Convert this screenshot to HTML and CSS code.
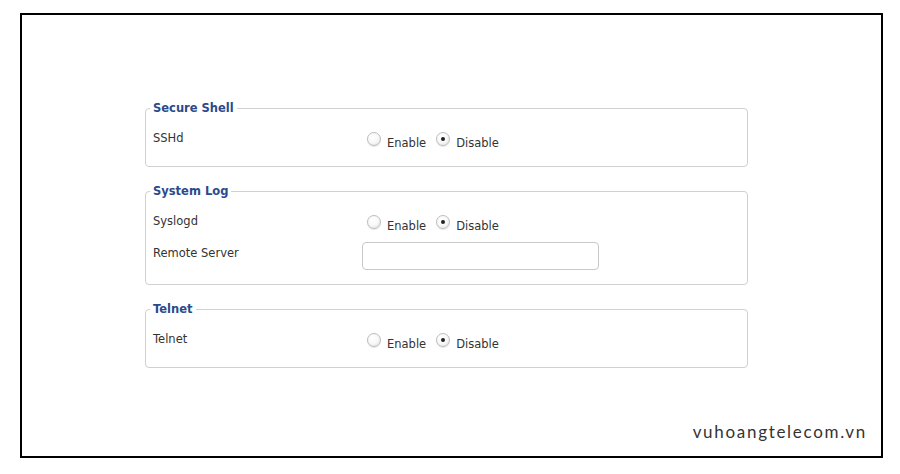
FILE: index.html
```html
<!DOCTYPE html>
<html>
<head>
<meta charset="utf-8">
<link rel="stylesheet" href="styles.css">
</head>
<body>
<div class="frame">
  <form class="settings">
    <fieldset class="group">
      <legend>Secure Shell</legend>
      <div class="row">
        <span class="label">SSHd</span>
        <span class="value">
          <input type="radio" name="sshd" class="radio"><span class="opt">Enable</span>
          <input type="radio" name="sshd" class="radio" checked><span class="opt">Disable</span>
        </span>
      </div>
    </fieldset>
    <fieldset class="group">
      <legend>System Log</legend>
      <div class="row">
        <span class="label">Syslogd</span>
        <span class="value">
          <input type="radio" name="syslogd" class="radio"><span class="opt">Enable</span>
          <input type="radio" name="syslogd" class="radio" checked><span class="opt">Disable</span>
        </span>
      </div>
      <div class="row row-input">
        <span class="label">Remote Server</span>
        <span class="value"><input type="text" class="text"></span>
      </div>
    </fieldset>
    <fieldset class="group">
      <legend>Telnet</legend>
      <div class="row">
        <span class="label">Telnet</span>
        <span class="value">
          <input type="radio" name="telnet" class="radio"><span class="opt">Enable</span>
          <input type="radio" name="telnet" class="radio" checked><span class="opt">Disable</span>
        </span>
      </div>
    </fieldset>
  </form>
  <div class="footer">vuhoangtelecom.vn</div>
</div>
</body>
</html>
```
FILE: styles.css
```css
html, body {
  margin: 0;
  padding: 0;
  background: #fff;
}
body {
  font-family: "DejaVu Sans", Verdana, sans-serif;
}
.frame {
  box-sizing: border-box;
  margin: 13px 0 0 20px;
  width: 863px;
  height: 445px;
  border: 2px solid #000;
  display: flex;
  flex-direction: column;
}
.settings {
  margin: 86px 0 0 123px;
  width: 603px;
  display: flex;
  flex-direction: column;
  gap: 17px;
}
.group {
  box-sizing: border-box;
  width: 603px;
  margin: 0;
  padding: 7px 7px 12px 7px;
  border: 1px solid #d0d0d0;
  border-radius: 4px;
  min-width: 0;
}
.group legend {
  margin-left: -3px;
  padding: 0 3px;
  font-size: 11.5px;
  line-height: 14px;
  font-weight: bold;
  color: #2b4a8b;
}
.row {
  height: 32px;
  display: flex;
  align-items: center;
}
.row-input {
  margin-bottom: 3px;
}
.label {
  width: 209px;
  font-size: 11.5px;
  color: #333;
}
.value {
  display: flex;
  align-items: center;
}
.radio {
  appearance: none;
  -webkit-appearance: none;
  box-sizing: border-box;
  width: 14px;
  height: 14px;
  margin: 1px 6px 0 0;
  border: 1px solid #bdbdbd;
  border-radius: 50%;
  background: radial-gradient(circle at 40% 35%, #ffffff 0%, #f8f8f8 50%, #dedede 100%);
  box-shadow: 0 1px 1px rgba(0,0,0,0.1);
  position: relative;
}
.value .radio:first-child {
  margin-left: 5px;
}
.radio:checked::after {
  content: "";
  position: absolute;
  left: 4px;
  top: 4px;
  width: 4px;
  height: 4px;
  border-radius: 50%;
  background: #222;
}
.opt {
  font-size: 11.5px;
  color: #333;
  margin-top: 9px;
  margin-right: 10px;
}
.text {
  box-sizing: border-box;
  width: 237px;
  height: 28px;
  margin: 5px 0 0 0;
  border: 1px solid #c9c9c9;
  border-radius: 4px;
  background: #fff;
  padding: 0 4px;
}
.footer {
  margin-top: auto;
  display: flex;
  justify-content: flex-end;
  padding: 0 14px 14px 0;
  font-family: Lato, "Open Sans", sans-serif;
  font-size: 17px;
  line-height: 20px;
  letter-spacing: 1.7px;
  color: #333;
}
```
